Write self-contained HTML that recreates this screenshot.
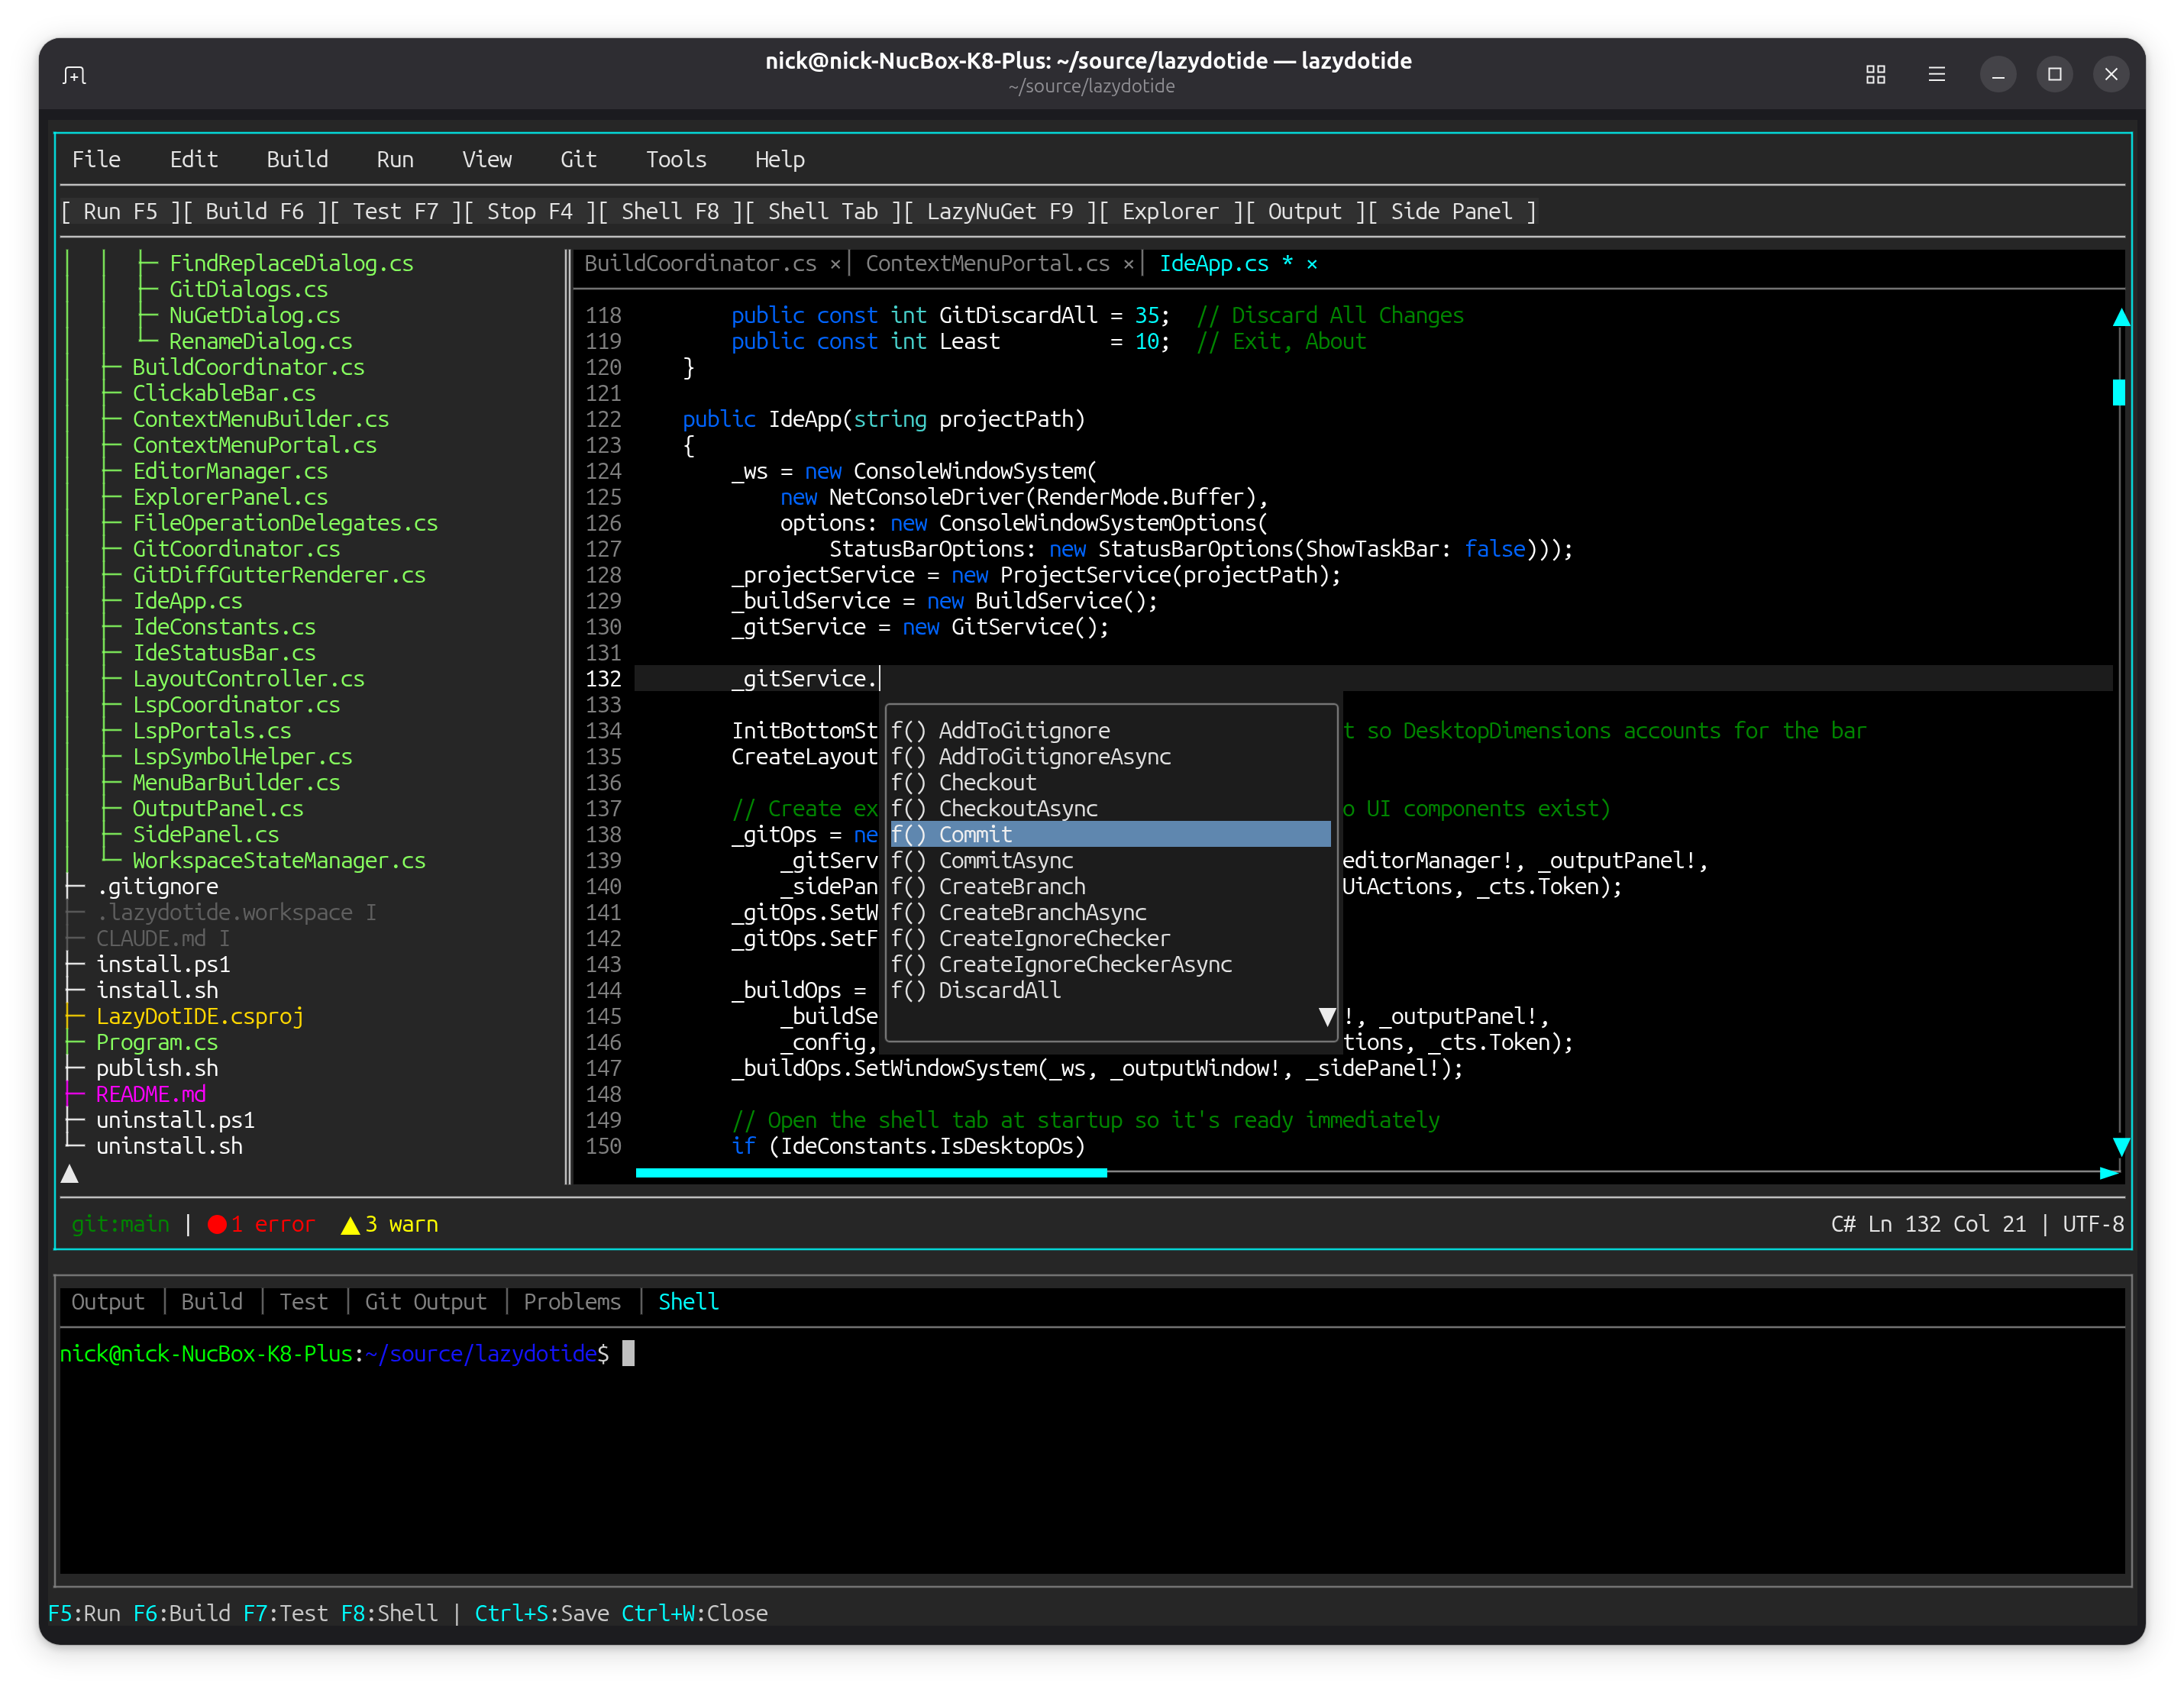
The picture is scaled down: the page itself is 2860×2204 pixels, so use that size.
<!DOCTYPE html>
<html lang="en"><head><meta charset="utf-8"><title>lazydotide</title>
<style>
html,body{margin:0;padding:0;background:#fff}
body{width:2860px;height:2204px;position:relative;overflow:hidden}
.win{position:absolute;left:51px;top:50px;width:2759px;height:2104px;will-change:transform;border-radius:28px;background:#1c1c1f;overflow:hidden;
  box-shadow:0 0 0 1px rgba(0,0,0,.18),0 3px 12px 1px rgba(0,0,0,.18),0 8px 36px 6px rgba(0,0,0,.13)}
.bar{position:absolute;left:0;top:0;width:100%;height:93px;background:#2e2d32}
.band{position:absolute;left:0;top:93px;width:100%;height:14px;background:#1b1b1f}
.title{position:absolute;left:-1px;top:11.5px;width:2752px;text-align:center;color:#fff;font:bold 29.3px/36px "Ubuntu Sans","Ubuntu","Liberation Sans",sans-serif;white-space:pre}
.sub{position:absolute;left:3px;top:48px;width:2752px;text-align:center;color:#908f94;font:24.5px/30px "Ubuntu Sans","Ubuntu","Liberation Sans",sans-serif;white-space:pre}
.circ{position:absolute;top:23px;width:48px;height:48px;border-radius:50%;background:#444348}
.ico{position:absolute}
.scr{position:absolute;left:0;top:0;width:2860px;height:2204px;will-change:transform}
.b{position:absolute}
.t{position:absolute;height:34px;line-height:34px;white-space:pre;font-family:"Ubuntu Sans Mono","DejaVu Sans Mono","Liberation Mono",monospace;
  font-size:30.667px;font-size-adjust:ch-width 0.56;font-kerning:none;font-variant-ligatures:none;letter-spacing:-1.1735px;margin-left:-1.2px;margin-top:1px}
</style></head>
<body>
<div class="win">
 <div class="bar"></div><div class="band"></div>
 <div class="title">nick@nick-NucBox-K8-Plus: ~/source/lazydotide — lazydotide</div>
 <div class="sub">~/source/lazydotide</div>
 <svg class="ico" style="left:30px;top:36px" width="34" height="26" viewBox="0 0 34 26" fill="none" stroke="#f2f2f2" stroke-width="2">
  <path d="M1 23 H3 Q5 23 5 21 V6 Q5 2 9 2 H23.5 Q27.5 2 27.5 6 V21 Q27.5 23 29.5 23 H31.5"/><path d="M11.3 15 H21.3 M16.3 10 V20"/></svg>
 <svg class="ico" style="left:2393px;top:35px" width="26" height="26" viewBox="0 0 26 26" fill="none" stroke="#f2f2f2" stroke-width="2">
  <rect x="1.5" y="1.5" width="8" height="8"/><rect x="15.5" y="1.5" width="8" height="8"/><rect x="1.5" y="15.5" width="8" height="8"/><rect x="15.5" y="15.5" width="8" height="8"/></svg>
 <svg class="ico" style="left:2475px;top:37px" width="22" height="20" viewBox="0 0 22 20" fill="#f2f2f2"><rect x="0" y="0.5" width="21" height="2"/><rect x="0" y="8.7" width="21" height="2"/><rect x="0" y="17" width="21" height="2"/></svg>
 <div class="circ" style="left:2541.5px"></div><div class="circ" style="left:2615.5px"></div><div class="circ" style="left:2689.5px"></div>
 <svg class="ico" style="left:2541.5px;top:23px" width="48" height="48" viewBox="0 0 48 48" fill="none" stroke="#f2f2f2" stroke-width="2"><path d="M16 29 H32"/></svg>
 <svg class="ico" style="left:2615.5px;top:23px" width="48" height="48" viewBox="0 0 48 48" fill="none" stroke="#f2f2f2" stroke-width="2"><rect x="16.5" y="16.5" width="15" height="15"/></svg>
 <svg class="ico" style="left:2689.5px;top:23px" width="48" height="48" viewBox="0 0 48 48" fill="none" stroke="#f2f2f2" stroke-width="2"><path d="M16.5 16.5 L31.5 31.5 M31.5 16.5 L16.5 31.5"/></svg>
</div>
<div class="scr">
<div class="b" style="left:63px;top:157px;width:2736px;height:1972px;background:#262626"></div>
<div class="b" style="left:70px;top:173px;width:2722px;height:2px;background:rgba(0,244,244,.86);box-shadow:0 0 0 1px rgba(0,244,244,.24)"></div>
<div class="b" style="left:70px;top:1635px;width:2722px;height:2px;background:rgba(0,244,244,.86);box-shadow:0 0 0 1px rgba(0,244,244,.24)"></div>
<div class="b" style="left:71px;top:173px;width:2px;height:1464px;background:rgba(0,244,244,.86);box-shadow:0 0 0 1px rgba(0,244,244,.24)"></div>
<div class="b" style="left:2791px;top:173px;width:2px;height:1464px;background:rgba(0,244,244,.86);box-shadow:0 0 0 1px rgba(0,244,244,.24)"></div>
<span class="t " style="left:95px;top:191px;color:#e4e4e4;">File</span>
<span class="t " style="left:223px;top:191px;color:#e4e4e4;">Edit</span>
<span class="t " style="left:351px;top:191px;color:#e4e4e4;">Build</span>
<span class="t " style="left:495px;top:191px;color:#e4e4e4;">Run</span>
<span class="t " style="left:607px;top:191px;color:#e4e4e4;">View</span>
<span class="t " style="left:735px;top:191px;color:#e4e4e4;">Git</span>
<span class="t " style="left:847px;top:191px;color:#e4e4e4;">Tools</span>
<span class="t " style="left:991px;top:191px;color:#e4e4e4;">Help</span>
<div class="b" style="left:79px;top:241px;width:2704px;height:2px;background:rgba(216,216,216,.86);box-shadow:0 0 0 1px rgba(216,216,216,.24)"></div>
<div class="b" style="left:79px;top:259px;width:1936px;height:34px;background:#303030"></div>
<span class="t " style="left:79px;top:259px;color:#e4e4e4;">[ Run F5 ][ Build F6 ][ Test F7 ][ Stop F4 ][ Shell F8 ][ Shell Tab ][ LazyNuGet F9 ][ Explorer ][ Output ][ Side Panel ]</span>
<div class="b" style="left:79px;top:309px;width:2704px;height:2px;background:rgba(216,216,216,.86);box-shadow:0 0 0 1px rgba(216,216,216,.24)"></div>
<div class="b" style="left:87px;top:327px;width:2px;height:34px;background:rgba(135,255,95,.86);box-shadow:0 0 0 1px rgba(135,255,95,.24)"></div>
<div class="b" style="left:135px;top:327px;width:2px;height:34px;background:rgba(135,255,95,.86);box-shadow:0 0 0 1px rgba(135,255,95,.24)"></div>
<div class="b" style="left:183px;top:327px;width:2px;height:34px;background:rgba(135,255,95,.86);box-shadow:0 0 0 1px rgba(135,255,95,.24)"></div>
<div class="b" style="left:182px;top:343px;width:25px;height:2px;background:rgba(135,255,95,.86);box-shadow:0 0 0 1px rgba(135,255,95,.24)"></div>
<span class="t " style="left:223px;top:327px;color:#87ff5f;">FindReplaceDialog.cs</span>
<div class="b" style="left:87px;top:361px;width:2px;height:34px;background:rgba(135,255,95,.86);box-shadow:0 0 0 1px rgba(135,255,95,.24)"></div>
<div class="b" style="left:135px;top:361px;width:2px;height:34px;background:rgba(135,255,95,.86);box-shadow:0 0 0 1px rgba(135,255,95,.24)"></div>
<div class="b" style="left:183px;top:361px;width:2px;height:34px;background:rgba(135,255,95,.86);box-shadow:0 0 0 1px rgba(135,255,95,.24)"></div>
<div class="b" style="left:182px;top:377px;width:25px;height:2px;background:rgba(135,255,95,.86);box-shadow:0 0 0 1px rgba(135,255,95,.24)"></div>
<span class="t " style="left:223px;top:361px;color:#87ff5f;">GitDialogs.cs</span>
<div class="b" style="left:87px;top:395px;width:2px;height:34px;background:rgba(135,255,95,.86);box-shadow:0 0 0 1px rgba(135,255,95,.24)"></div>
<div class="b" style="left:135px;top:395px;width:2px;height:34px;background:rgba(135,255,95,.86);box-shadow:0 0 0 1px rgba(135,255,95,.24)"></div>
<div class="b" style="left:183px;top:395px;width:2px;height:34px;background:rgba(135,255,95,.86);box-shadow:0 0 0 1px rgba(135,255,95,.24)"></div>
<div class="b" style="left:182px;top:411px;width:25px;height:2px;background:rgba(135,255,95,.86);box-shadow:0 0 0 1px rgba(135,255,95,.24)"></div>
<span class="t " style="left:223px;top:395px;color:#87ff5f;">NuGetDialog.cs</span>
<div class="b" style="left:87px;top:429px;width:2px;height:34px;background:rgba(135,255,95,.86);box-shadow:0 0 0 1px rgba(135,255,95,.24)"></div>
<div class="b" style="left:135px;top:429px;width:2px;height:34px;background:rgba(135,255,95,.86);box-shadow:0 0 0 1px rgba(135,255,95,.24)"></div>
<div class="b" style="left:183px;top:429px;width:2px;height:18px;background:rgba(135,255,95,.86);box-shadow:0 0 0 1px rgba(135,255,95,.24)"></div>
<div class="b" style="left:182px;top:445px;width:25px;height:2px;background:rgba(135,255,95,.86);box-shadow:0 0 0 1px rgba(135,255,95,.24)"></div>
<span class="t " style="left:223px;top:429px;color:#87ff5f;">RenameDialog.cs</span>
<div class="b" style="left:87px;top:463px;width:2px;height:34px;background:rgba(135,255,95,.86);box-shadow:0 0 0 1px rgba(135,255,95,.24)"></div>
<div class="b" style="left:135px;top:463px;width:2px;height:34px;background:rgba(135,255,95,.86);box-shadow:0 0 0 1px rgba(135,255,95,.24)"></div>
<div class="b" style="left:134px;top:479px;width:25px;height:2px;background:rgba(135,255,95,.86);box-shadow:0 0 0 1px rgba(135,255,95,.24)"></div>
<span class="t " style="left:175px;top:463px;color:#87ff5f;">BuildCoordinator.cs</span>
<div class="b" style="left:87px;top:497px;width:2px;height:34px;background:rgba(135,255,95,.86);box-shadow:0 0 0 1px rgba(135,255,95,.24)"></div>
<div class="b" style="left:135px;top:497px;width:2px;height:34px;background:rgba(135,255,95,.86);box-shadow:0 0 0 1px rgba(135,255,95,.24)"></div>
<div class="b" style="left:134px;top:513px;width:25px;height:2px;background:rgba(135,255,95,.86);box-shadow:0 0 0 1px rgba(135,255,95,.24)"></div>
<span class="t " style="left:175px;top:497px;color:#87ff5f;">ClickableBar.cs</span>
<div class="b" style="left:87px;top:531px;width:2px;height:34px;background:rgba(135,255,95,.86);box-shadow:0 0 0 1px rgba(135,255,95,.24)"></div>
<div class="b" style="left:135px;top:531px;width:2px;height:34px;background:rgba(135,255,95,.86);box-shadow:0 0 0 1px rgba(135,255,95,.24)"></div>
<div class="b" style="left:134px;top:547px;width:25px;height:2px;background:rgba(135,255,95,.86);box-shadow:0 0 0 1px rgba(135,255,95,.24)"></div>
<span class="t " style="left:175px;top:531px;color:#87ff5f;">ContextMenuBuilder.cs</span>
<div class="b" style="left:87px;top:565px;width:2px;height:34px;background:rgba(135,255,95,.86);box-shadow:0 0 0 1px rgba(135,255,95,.24)"></div>
<div class="b" style="left:135px;top:565px;width:2px;height:34px;background:rgba(135,255,95,.86);box-shadow:0 0 0 1px rgba(135,255,95,.24)"></div>
<div class="b" style="left:134px;top:581px;width:25px;height:2px;background:rgba(135,255,95,.86);box-shadow:0 0 0 1px rgba(135,255,95,.24)"></div>
<span class="t " style="left:175px;top:565px;color:#87ff5f;">ContextMenuPortal.cs</span>
<div class="b" style="left:87px;top:599px;width:2px;height:34px;background:rgba(135,255,95,.86);box-shadow:0 0 0 1px rgba(135,255,95,.24)"></div>
<div class="b" style="left:135px;top:599px;width:2px;height:34px;background:rgba(135,255,95,.86);box-shadow:0 0 0 1px rgba(135,255,95,.24)"></div>
<div class="b" style="left:134px;top:615px;width:25px;height:2px;background:rgba(135,255,95,.86);box-shadow:0 0 0 1px rgba(135,255,95,.24)"></div>
<span class="t " style="left:175px;top:599px;color:#87ff5f;">EditorManager.cs</span>
<div class="b" style="left:87px;top:633px;width:2px;height:34px;background:rgba(135,255,95,.86);box-shadow:0 0 0 1px rgba(135,255,95,.24)"></div>
<div class="b" style="left:135px;top:633px;width:2px;height:34px;background:rgba(135,255,95,.86);box-shadow:0 0 0 1px rgba(135,255,95,.24)"></div>
<div class="b" style="left:134px;top:649px;width:25px;height:2px;background:rgba(135,255,95,.86);box-shadow:0 0 0 1px rgba(135,255,95,.24)"></div>
<span class="t " style="left:175px;top:633px;color:#87ff5f;">ExplorerPanel.cs</span>
<div class="b" style="left:87px;top:667px;width:2px;height:34px;background:rgba(135,255,95,.86);box-shadow:0 0 0 1px rgba(135,255,95,.24)"></div>
<div class="b" style="left:135px;top:667px;width:2px;height:34px;background:rgba(135,255,95,.86);box-shadow:0 0 0 1px rgba(135,255,95,.24)"></div>
<div class="b" style="left:134px;top:683px;width:25px;height:2px;background:rgba(135,255,95,.86);box-shadow:0 0 0 1px rgba(135,255,95,.24)"></div>
<span class="t " style="left:175px;top:667px;color:#87ff5f;">FileOperationDelegates.cs</span>
<div class="b" style="left:87px;top:701px;width:2px;height:34px;background:rgba(135,255,95,.86);box-shadow:0 0 0 1px rgba(135,255,95,.24)"></div>
<div class="b" style="left:135px;top:701px;width:2px;height:34px;background:rgba(135,255,95,.86);box-shadow:0 0 0 1px rgba(135,255,95,.24)"></div>
<div class="b" style="left:134px;top:717px;width:25px;height:2px;background:rgba(135,255,95,.86);box-shadow:0 0 0 1px rgba(135,255,95,.24)"></div>
<span class="t " style="left:175px;top:701px;color:#87ff5f;">GitCoordinator.cs</span>
<div class="b" style="left:87px;top:735px;width:2px;height:34px;background:rgba(135,255,95,.86);box-shadow:0 0 0 1px rgba(135,255,95,.24)"></div>
<div class="b" style="left:135px;top:735px;width:2px;height:34px;background:rgba(135,255,95,.86);box-shadow:0 0 0 1px rgba(135,255,95,.24)"></div>
<div class="b" style="left:134px;top:751px;width:25px;height:2px;background:rgba(135,255,95,.86);box-shadow:0 0 0 1px rgba(135,255,95,.24)"></div>
<span class="t " style="left:175px;top:735px;color:#87ff5f;">GitDiffGutterRenderer.cs</span>
<div class="b" style="left:87px;top:769px;width:2px;height:34px;background:rgba(135,255,95,.86);box-shadow:0 0 0 1px rgba(135,255,95,.24)"></div>
<div class="b" style="left:135px;top:769px;width:2px;height:34px;background:rgba(135,255,95,.86);box-shadow:0 0 0 1px rgba(135,255,95,.24)"></div>
<div class="b" style="left:134px;top:785px;width:25px;height:2px;background:rgba(135,255,95,.86);box-shadow:0 0 0 1px rgba(135,255,95,.24)"></div>
<span class="t " style="left:175px;top:769px;color:#87ff5f;">IdeApp.cs</span>
<div class="b" style="left:87px;top:803px;width:2px;height:34px;background:rgba(135,255,95,.86);box-shadow:0 0 0 1px rgba(135,255,95,.24)"></div>
<div class="b" style="left:135px;top:803px;width:2px;height:34px;background:rgba(135,255,95,.86);box-shadow:0 0 0 1px rgba(135,255,95,.24)"></div>
<div class="b" style="left:134px;top:819px;width:25px;height:2px;background:rgba(135,255,95,.86);box-shadow:0 0 0 1px rgba(135,255,95,.24)"></div>
<span class="t " style="left:175px;top:803px;color:#87ff5f;">IdeConstants.cs</span>
<div class="b" style="left:87px;top:837px;width:2px;height:34px;background:rgba(135,255,95,.86);box-shadow:0 0 0 1px rgba(135,255,95,.24)"></div>
<div class="b" style="left:135px;top:837px;width:2px;height:34px;background:rgba(135,255,95,.86);box-shadow:0 0 0 1px rgba(135,255,95,.24)"></div>
<div class="b" style="left:134px;top:853px;width:25px;height:2px;background:rgba(135,255,95,.86);box-shadow:0 0 0 1px rgba(135,255,95,.24)"></div>
<span class="t " style="left:175px;top:837px;color:#87ff5f;">IdeStatusBar.cs</span>
<div class="b" style="left:87px;top:871px;width:2px;height:34px;background:rgba(135,255,95,.86);box-shadow:0 0 0 1px rgba(135,255,95,.24)"></div>
<div class="b" style="left:135px;top:871px;width:2px;height:34px;background:rgba(135,255,95,.86);box-shadow:0 0 0 1px rgba(135,255,95,.24)"></div>
<div class="b" style="left:134px;top:887px;width:25px;height:2px;background:rgba(135,255,95,.86);box-shadow:0 0 0 1px rgba(135,255,95,.24)"></div>
<span class="t " style="left:175px;top:871px;color:#87ff5f;">LayoutController.cs</span>
<div class="b" style="left:87px;top:905px;width:2px;height:34px;background:rgba(135,255,95,.86);box-shadow:0 0 0 1px rgba(135,255,95,.24)"></div>
<div class="b" style="left:135px;top:905px;width:2px;height:34px;background:rgba(135,255,95,.86);box-shadow:0 0 0 1px rgba(135,255,95,.24)"></div>
<div class="b" style="left:134px;top:921px;width:25px;height:2px;background:rgba(135,255,95,.86);box-shadow:0 0 0 1px rgba(135,255,95,.24)"></div>
<span class="t " style="left:175px;top:905px;color:#87ff5f;">LspCoordinator.cs</span>
<div class="b" style="left:87px;top:939px;width:2px;height:34px;background:rgba(135,255,95,.86);box-shadow:0 0 0 1px rgba(135,255,95,.24)"></div>
<div class="b" style="left:135px;top:939px;width:2px;height:34px;background:rgba(135,255,95,.86);box-shadow:0 0 0 1px rgba(135,255,95,.24)"></div>
<div class="b" style="left:134px;top:955px;width:25px;height:2px;background:rgba(135,255,95,.86);box-shadow:0 0 0 1px rgba(135,255,95,.24)"></div>
<span class="t " style="left:175px;top:939px;color:#87ff5f;">LspPortals.cs</span>
<div class="b" style="left:87px;top:973px;width:2px;height:34px;background:rgba(135,255,95,.86);box-shadow:0 0 0 1px rgba(135,255,95,.24)"></div>
<div class="b" style="left:135px;top:973px;width:2px;height:34px;background:rgba(135,255,95,.86);box-shadow:0 0 0 1px rgba(135,255,95,.24)"></div>
<div class="b" style="left:134px;top:989px;width:25px;height:2px;background:rgba(135,255,95,.86);box-shadow:0 0 0 1px rgba(135,255,95,.24)"></div>
<span class="t " style="left:175px;top:973px;color:#87ff5f;">LspSymbolHelper.cs</span>
<div class="b" style="left:87px;top:1007px;width:2px;height:34px;background:rgba(135,255,95,.86);box-shadow:0 0 0 1px rgba(135,255,95,.24)"></div>
<div class="b" style="left:135px;top:1007px;width:2px;height:34px;background:rgba(135,255,95,.86);box-shadow:0 0 0 1px rgba(135,255,95,.24)"></div>
<div class="b" style="left:134px;top:1023px;width:25px;height:2px;background:rgba(135,255,95,.86);box-shadow:0 0 0 1px rgba(135,255,95,.24)"></div>
<span class="t " style="left:175px;top:1007px;color:#87ff5f;">MenuBarBuilder.cs</span>
<div class="b" style="left:87px;top:1041px;width:2px;height:34px;background:rgba(135,255,95,.86);box-shadow:0 0 0 1px rgba(135,255,95,.24)"></div>
<div class="b" style="left:135px;top:1041px;width:2px;height:34px;background:rgba(135,255,95,.86);box-shadow:0 0 0 1px rgba(135,255,95,.24)"></div>
<div class="b" style="left:134px;top:1057px;width:25px;height:2px;background:rgba(135,255,95,.86);box-shadow:0 0 0 1px rgba(135,255,95,.24)"></div>
<span class="t " style="left:175px;top:1041px;color:#87ff5f;">OutputPanel.cs</span>
<div class="b" style="left:87px;top:1075px;width:2px;height:34px;background:rgba(135,255,95,.86);box-shadow:0 0 0 1px rgba(135,255,95,.24)"></div>
<div class="b" style="left:135px;top:1075px;width:2px;height:34px;background:rgba(135,255,95,.86);box-shadow:0 0 0 1px rgba(135,255,95,.24)"></div>
<div class="b" style="left:134px;top:1091px;width:25px;height:2px;background:rgba(135,255,95,.86);box-shadow:0 0 0 1px rgba(135,255,95,.24)"></div>
<span class="t " style="left:175px;top:1075px;color:#87ff5f;">SidePanel.cs</span>
<div class="b" style="left:87px;top:1109px;width:2px;height:34px;background:rgba(135,255,95,.86);box-shadow:0 0 0 1px rgba(135,255,95,.24)"></div>
<div class="b" style="left:135px;top:1109px;width:2px;height:18px;background:rgba(135,255,95,.86);box-shadow:0 0 0 1px rgba(135,255,95,.24)"></div>
<div class="b" style="left:134px;top:1125px;width:25px;height:2px;background:rgba(135,255,95,.86);box-shadow:0 0 0 1px rgba(135,255,95,.24)"></div>
<span class="t " style="left:175px;top:1109px;color:#87ff5f;">WorkspaceStateManager.cs</span>
<div class="b" style="left:87px;top:1143px;width:2px;height:34px;background:rgba(255,255,255,.86);box-shadow:0 0 0 1px rgba(255,255,255,.24)"></div>
<div class="b" style="left:86px;top:1159px;width:25px;height:2px;background:rgba(255,255,255,.86);box-shadow:0 0 0 1px rgba(255,255,255,.24)"></div>
<span class="t " style="left:127px;top:1143px;color:#ffffff;">.gitignore</span>
<div class="b" style="left:87px;top:1177px;width:2px;height:34px;background:rgba(95,95,95,.86);box-shadow:0 0 0 1px rgba(95,95,95,.24)"></div>
<div class="b" style="left:86px;top:1193px;width:25px;height:2px;background:rgba(95,95,95,.86);box-shadow:0 0 0 1px rgba(95,95,95,.24)"></div>
<span class="t " style="left:127px;top:1177px;color:#5f5f5f;">.lazydotide.workspace I</span>
<div class="b" style="left:87px;top:1211px;width:2px;height:34px;background:rgba(95,95,95,.86);box-shadow:0 0 0 1px rgba(95,95,95,.24)"></div>
<div class="b" style="left:86px;top:1227px;width:25px;height:2px;background:rgba(95,95,95,.86);box-shadow:0 0 0 1px rgba(95,95,95,.24)"></div>
<span class="t " style="left:127px;top:1211px;color:#5f5f5f;">CLAUDE.md I</span>
<div class="b" style="left:87px;top:1245px;width:2px;height:34px;background:rgba(255,255,255,.86);box-shadow:0 0 0 1px rgba(255,255,255,.24)"></div>
<div class="b" style="left:86px;top:1261px;width:25px;height:2px;background:rgba(255,255,255,.86);box-shadow:0 0 0 1px rgba(255,255,255,.24)"></div>
<span class="t " style="left:127px;top:1245px;color:#ffffff;">install.ps1</span>
<div class="b" style="left:87px;top:1279px;width:2px;height:34px;background:rgba(255,255,255,.86);box-shadow:0 0 0 1px rgba(255,255,255,.24)"></div>
<div class="b" style="left:86px;top:1295px;width:25px;height:2px;background:rgba(255,255,255,.86);box-shadow:0 0 0 1px rgba(255,255,255,.24)"></div>
<span class="t " style="left:127px;top:1279px;color:#ffffff;">install.sh</span>
<div class="b" style="left:87px;top:1313px;width:2px;height:34px;background:rgba(255,215,0,.86);box-shadow:0 0 0 1px rgba(255,215,0,.24)"></div>
<div class="b" style="left:86px;top:1329px;width:25px;height:2px;background:rgba(255,215,0,.86);box-shadow:0 0 0 1px rgba(255,215,0,.24)"></div>
<span class="t " style="left:127px;top:1313px;color:#ffd700;">LazyDotIDE.csproj</span>
<div class="b" style="left:87px;top:1347px;width:2px;height:34px;background:rgba(135,255,95,.86);box-shadow:0 0 0 1px rgba(135,255,95,.24)"></div>
<div class="b" style="left:86px;top:1363px;width:25px;height:2px;background:rgba(135,255,95,.86);box-shadow:0 0 0 1px rgba(135,255,95,.24)"></div>
<span class="t " style="left:127px;top:1347px;color:#87ff5f;">Program.cs</span>
<div class="b" style="left:87px;top:1381px;width:2px;height:34px;background:rgba(255,255,255,.86);box-shadow:0 0 0 1px rgba(255,255,255,.24)"></div>
<div class="b" style="left:86px;top:1397px;width:25px;height:2px;background:rgba(255,255,255,.86);box-shadow:0 0 0 1px rgba(255,255,255,.24)"></div>
<span class="t " style="left:127px;top:1381px;color:#ffffff;">publish.sh</span>
<div class="b" style="left:87px;top:1415px;width:2px;height:34px;background:rgba(255,0,255,.86);box-shadow:0 0 0 1px rgba(255,0,255,.24)"></div>
<div class="b" style="left:86px;top:1431px;width:25px;height:2px;background:rgba(255,0,255,.86);box-shadow:0 0 0 1px rgba(255,0,255,.24)"></div>
<span class="t " style="left:127px;top:1415px;color:#ff00ff;">README.md</span>
<div class="b" style="left:87px;top:1449px;width:2px;height:34px;background:rgba(255,255,255,.86);box-shadow:0 0 0 1px rgba(255,255,255,.24)"></div>
<div class="b" style="left:86px;top:1465px;width:25px;height:2px;background:rgba(255,255,255,.86);box-shadow:0 0 0 1px rgba(255,255,255,.24)"></div>
<span class="t " style="left:127px;top:1449px;color:#ffffff;">uninstall.ps1</span>
<div class="b" style="left:87px;top:1483px;width:2px;height:18px;background:rgba(255,255,255,.86);box-shadow:0 0 0 1px rgba(255,255,255,.24)"></div>
<div class="b" style="left:86px;top:1499px;width:25px;height:2px;background:rgba(255,255,255,.86);box-shadow:0 0 0 1px rgba(255,255,255,.24)"></div>
<span class="t " style="left:127px;top:1483px;color:#ffffff;">uninstall.sh</span>
<div class="b" style="left:79px;top:1524px;width:24px;height:25px;background:#e8e8e8;clip-path:polygon(50% 0,100% 100%,0 100%)"></div>
<div class="b" style="left:740px;top:327px;width:2px;height:1224px;background:rgba(216,216,216,.86);box-shadow:0 0 0 1px rgba(216,216,216,.24)"></div>
<div class="b" style="left:745px;top:327px;width:2px;height:1224px;background:rgba(216,216,216,.86);box-shadow:0 0 0 1px rgba(216,216,216,.24)"></div>
<div class="b" style="left:751px;top:327px;width:2032px;height:1224px;background:#000"></div>
<span class="t " style="left:767px;top:327px;color:#828282;">BuildCoordinator.cs ×</span>
<div class="b" style="left:1111px;top:327px;width:2px;height:34px;background:rgba(130,130,130,.86);box-shadow:0 0 0 1px rgba(130,130,130,.24)"></div>
<span class="t " style="left:1135px;top:327px;color:#828282;">ContextMenuPortal.cs ×</span>
<div class="b" style="left:1495px;top:327px;width:2px;height:34px;background:rgba(130,130,130,.86);box-shadow:0 0 0 1px rgba(130,130,130,.24)"></div>
<span class="t " style="left:1519px;top:327px;color:#00ffff;">IdeApp.cs * ×</span>
<div class="b" style="left:751px;top:377px;width:2032px;height:2px;background:rgba(133,133,133,.86);box-shadow:0 0 0 1px rgba(133,133,133,.24)"></div>
<div class="b" style="left:831px;top:871px;width:1936px;height:34px;background:#1c1c1c"></div>
<span class="t " style="left:767px;top:395px;color:#808080;">118</span>
<span class="t" style="left:959px;top:395px;color:#ffffff"><span style="color:#0064ff">public const</span> <span style="color:#48d1cc">int</span> GitDiscardAll = <span style="color:#00ffff">35</span>;  <span style="color:#008600">// Discard All Changes</span></span>
<span class="t " style="left:767px;top:429px;color:#808080;">119</span>
<span class="t" style="left:959px;top:429px;color:#ffffff"><span style="color:#0064ff">public const</span> <span style="color:#48d1cc">int</span> Least         = <span style="color:#00ffff">10</span>;  <span style="color:#008600">// Exit, About</span></span>
<span class="t " style="left:767px;top:463px;color:#808080;">120</span>
<span class="t" style="left:895px;top:463px;color:#ffffff">}</span>
<span class="t " style="left:767px;top:497px;color:#808080;">121</span>
<span class="t " style="left:767px;top:531px;color:#808080;">122</span>
<span class="t" style="left:895px;top:531px;color:#ffffff"><span style="color:#0064ff">public</span> IdeApp(<span style="color:#48d1cc">string</span> projectPath)</span>
<span class="t " style="left:767px;top:565px;color:#808080;">123</span>
<span class="t" style="left:895px;top:565px;color:#ffffff">{</span>
<span class="t " style="left:767px;top:599px;color:#808080;">124</span>
<span class="t" style="left:959px;top:599px;color:#ffffff">_ws = <span style="color:#0064ff">new</span> ConsoleWindowSystem(</span>
<span class="t " style="left:767px;top:633px;color:#808080;">125</span>
<span class="t" style="left:1023px;top:633px;color:#ffffff"><span style="color:#0064ff">new</span> NetConsoleDriver(RenderMode.Buffer),</span>
<span class="t " style="left:767px;top:667px;color:#808080;">126</span>
<span class="t" style="left:1023px;top:667px;color:#ffffff">options: <span style="color:#0064ff">new</span> ConsoleWindowSystemOptions(</span>
<span class="t " style="left:767px;top:701px;color:#808080;">127</span>
<span class="t" style="left:1087px;top:701px;color:#ffffff">StatusBarOptions: <span style="color:#0064ff">new</span> StatusBarOptions(ShowTaskBar: <span style="color:#0064ff">false</span>)));</span>
<span class="t " style="left:767px;top:735px;color:#808080;">128</span>
<span class="t" style="left:959px;top:735px;color:#ffffff">_projectService = <span style="color:#0064ff">new</span> ProjectService(projectPath);</span>
<span class="t " style="left:767px;top:769px;color:#808080;">129</span>
<span class="t" style="left:959px;top:769px;color:#ffffff">_buildService = <span style="color:#0064ff">new</span> BuildService();</span>
<span class="t " style="left:767px;top:803px;color:#808080;">130</span>
<span class="t" style="left:959px;top:803px;color:#ffffff">_gitService = <span style="color:#0064ff">new</span> GitService();</span>
<span class="t " style="left:767px;top:837px;color:#808080;">131</span>
<span class="t " style="left:767px;top:871px;color:#ffffff;">132</span>
<span class="t" style="left:959px;top:871px;color:#ffffff">_gitService.</span>
<span class="t " style="left:767px;top:905px;color:#808080;">133</span>
<span class="t " style="left:767px;top:939px;color:#808080;">134</span>
<span class="t" style="left:959px;top:939px;color:#ffffff">InitBottomSt</span>
<span class="t " style="left:1759px;top:939px;color:#008600;">t so DesktopDimensions accounts for the bar</span>
<span class="t " style="left:767px;top:973px;color:#808080;">135</span>
<span class="t" style="left:959px;top:973px;color:#ffffff">CreateLayout</span>
<span class="t " style="left:767px;top:1007px;color:#808080;">136</span>
<span class="t " style="left:767px;top:1041px;color:#808080;">137</span>
<span class="t" style="left:959px;top:1041px;color:#ffffff"><span style="color:#008600">// Create ex</span></span>
<span class="t " style="left:1759px;top:1041px;color:#008600;">o UI components exist)</span>
<span class="t " style="left:767px;top:1075px;color:#808080;">138</span>
<span class="t" style="left:959px;top:1075px;color:#ffffff">_gitOps = <span style="color:#0064ff">ne</span></span>
<span class="t " style="left:767px;top:1109px;color:#808080;">139</span>
<span class="t" style="left:1023px;top:1109px;color:#ffffff">_gitServ</span>
<span class="t " style="left:1759px;top:1109px;color:#ffffff;">editorManager!, _outputPanel!,</span>
<span class="t " style="left:767px;top:1143px;color:#808080;">140</span>
<span class="t" style="left:1023px;top:1143px;color:#ffffff">_sidePan</span>
<span class="t " style="left:1759px;top:1143px;color:#ffffff;">UiActions, _cts.Token);</span>
<span class="t " style="left:767px;top:1177px;color:#808080;">141</span>
<span class="t" style="left:959px;top:1177px;color:#ffffff">_gitOps.SetW</span>
<span class="t " style="left:767px;top:1211px;color:#808080;">142</span>
<span class="t" style="left:959px;top:1211px;color:#ffffff">_gitOps.SetF</span>
<span class="t " style="left:767px;top:1245px;color:#808080;">143</span>
<span class="t " style="left:767px;top:1279px;color:#808080;">144</span>
<span class="t" style="left:959px;top:1279px;color:#ffffff">_buildOps = </span>
<span class="t " style="left:767px;top:1313px;color:#808080;">145</span>
<span class="t" style="left:1023px;top:1313px;color:#ffffff">_buildSe</span>
<span class="t " style="left:1759px;top:1313px;color:#ffffff;">!, _outputPanel!,</span>
<span class="t " style="left:767px;top:1347px;color:#808080;">146</span>
<span class="t" style="left:1023px;top:1347px;color:#ffffff">_config,</span>
<span class="t " style="left:1759px;top:1347px;color:#ffffff;">tions, _cts.Token);</span>
<span class="t " style="left:767px;top:1381px;color:#808080;">147</span>
<span class="t" style="left:959px;top:1381px;color:#ffffff">_buildOps.SetWindowSystem(_ws, _outputWindow!, _sidePanel!);</span>
<span class="t " style="left:767px;top:1415px;color:#808080;">148</span>
<span class="t " style="left:767px;top:1449px;color:#808080;">149</span>
<span class="t" style="left:959px;top:1449px;color:#ffffff"><span style="color:#008600">// Open the shell tab at startup so it's ready immediately</span></span>
<span class="t " style="left:767px;top:1483px;color:#808080;">150</span>
<span class="t" style="left:959px;top:1483px;color:#ffffff"><span style="color:#0064ff">if</span> (IdeConstants.IsDesktopOs)</span>
<div class="b" style="left:1150.5px;top:871px;width:2.5px;height:34px;background:#e4e4e4"></div>
<div class="b" style="left:2775px;top:429px;width:2px;height:1054px;background:rgba(106,106,106,.86);box-shadow:0 0 0 1px rgba(106,106,106,.24)"></div>
<div class="b" style="left:2775px;top:1517px;width:2px;height:18px;background:rgba(106,106,106,.86);box-shadow:0 0 0 1px rgba(106,106,106,.24)"></div>
<div class="b" style="left:2766.6px;top:403px;width:24px;height:24.3px;background:#00ffff;clip-path:polygon(50% 0,100% 100%,0 100%)"></div>
<div class="b" style="left:2767px;top:497px;width:16px;height:34px;background:#00ffff"></div>
<div class="b" style="left:2766.8px;top:1490.3px;width:23.6px;height:25.2px;background:#00ffff;clip-path:polygon(0 0,100% 0,50% 100%)"></div>
<div class="b" style="left:1439px;top:1533px;width:1338px;height:2px;background:rgba(154,154,154,.86);box-shadow:0 0 0 1px rgba(154,154,154,.24)"></div>
<div class="b" style="left:833px;top:1530px;width:617px;height:12px;background:#00ffff"></div>
<div class="b" style="left:2750.2px;top:1528.2px;width:25px;height:16.5px;background:#00ffff;clip-path:polygon(0 0,100% 50%,0 100%)"></div>
<div class="b" style="left:1151px;top:905px;width:608px;height:476px;background:#1c1c1c"></div>
<div class="b" style="left:1159px;top:921px;width:590px;height:440px;border:2px solid rgba(128,128,128,.9);border-radius:6px;box-shadow:0 0 0 1px rgba(128,128,128,.22),inset 0 0 0 1px rgba(128,128,128,.22)"></div>
<span class="t " style="left:1167px;top:939px;color:#e0e0e0;">f() AddToGitignore</span>
<span class="t " style="left:1167px;top:973px;color:#e0e0e0;">f() AddToGitignoreAsync</span>
<span class="t " style="left:1167px;top:1007px;color:#e0e0e0;">f() Checkout</span>
<span class="t " style="left:1167px;top:1041px;color:#e0e0e0;">f() CheckoutAsync</span>
<div class="b" style="left:1167px;top:1075px;width:576px;height:34px;background:#5f87af"></div>
<span class="t " style="left:1167px;top:1075px;color:#f0f0f0;">f() Commit</span>
<span class="t " style="left:1167px;top:1109px;color:#e0e0e0;">f() CommitAsync</span>
<span class="t " style="left:1167px;top:1143px;color:#e0e0e0;">f() CreateBranch</span>
<span class="t " style="left:1167px;top:1177px;color:#e0e0e0;">f() CreateBranchAsync</span>
<span class="t " style="left:1167px;top:1211px;color:#e0e0e0;">f() CreateIgnoreChecker</span>
<span class="t " style="left:1167px;top:1245px;color:#e0e0e0;">f() CreateIgnoreCheckerAsync</span>
<span class="t " style="left:1167px;top:1279px;color:#e0e0e0;">f() DiscardAll</span>
<div class="b" style="left:1726.8px;top:1320px;width:23.6px;height:25px;background:#ebebeb;clip-path:polygon(0 0,100% 0,50% 100%)"></div>
<div class="b" style="left:79px;top:1567px;width:2704px;height:2px;background:rgba(216,216,216,.86);box-shadow:0 0 0 1px rgba(216,216,216,.24)"></div>
<span class="t" style="left:95px;top:1585px"><span style="color:#008600">git:main</span><span style="color:#ffffff"> | </span></span>
<div class="b" style="left:272px;top:1591px;width:25px;height:25px;border-radius:50%;background:#ff0000"></div>
<span class="t " style="left:303px;top:1585px;color:#ff0000;">1 error</span>
<div class="b" style="left:446px;top:1593px;width:26px;height:24px;background:#ffff00;clip-path:polygon(50% 0,100% 100%,0 100%)"></div>
<span class="t " style="left:479px;top:1585px;color:#ffff00;">3 warn</span>
<span class="t " style="left:2399px;top:1585px;color:#e4e4e4;">C# Ln 132 Col 21 | UTF-8</span>
<div class="b" style="left:70px;top:1669px;width:2722px;height:2px;background:rgba(128,128,128,.86);box-shadow:0 0 0 1px rgba(128,128,128,.24)"></div>
<div class="b" style="left:70px;top:2077px;width:2722px;height:2px;background:rgba(128,128,128,.86);box-shadow:0 0 0 1px rgba(128,128,128,.24)"></div>
<div class="b" style="left:71px;top:1669px;width:2px;height:410px;background:rgba(128,128,128,.86);box-shadow:0 0 0 1px rgba(128,128,128,.24)"></div>
<div class="b" style="left:2791px;top:1669px;width:2px;height:410px;background:rgba(128,128,128,.86);box-shadow:0 0 0 1px rgba(128,128,128,.24)"></div>
<div class="b" style="left:79px;top:1687px;width:2704px;height:374px;background:#000"></div>
<span class="t " style="left:95px;top:1687px;color:#828282;">Output</span>
<span class="t " style="left:239px;top:1687px;color:#828282;">Build</span>
<span class="t " style="left:367px;top:1687px;color:#828282;">Test</span>
<span class="t " style="left:479px;top:1687px;color:#828282;">Git Output</span>
<span class="t " style="left:687px;top:1687px;color:#828282;">Problems</span>
<div class="b" style="left:215px;top:1687px;width:2px;height:34px;background:rgba(110,110,110,.86);box-shadow:0 0 0 1px rgba(110,110,110,.24)"></div>
<div class="b" style="left:343px;top:1687px;width:2px;height:34px;background:rgba(110,110,110,.86);box-shadow:0 0 0 1px rgba(110,110,110,.24)"></div>
<div class="b" style="left:455px;top:1687px;width:2px;height:34px;background:rgba(110,110,110,.86);box-shadow:0 0 0 1px rgba(110,110,110,.24)"></div>
<div class="b" style="left:663px;top:1687px;width:2px;height:34px;background:rgba(110,110,110,.86);box-shadow:0 0 0 1px rgba(110,110,110,.24)"></div>
<div class="b" style="left:839px;top:1687px;width:2px;height:34px;background:rgba(110,110,110,.86);box-shadow:0 0 0 1px rgba(110,110,110,.24)"></div>
<span class="t " style="left:863px;top:1687px;color:#00ffff;">Shell</span>
<div class="b" style="left:79px;top:1737px;width:2704px;height:2px;background:rgba(133,133,133,.86);box-shadow:0 0 0 1px rgba(133,133,133,.24)"></div>
<span class="t" style="left:79px;top:1755px"><span style="color:#00ff00">nick@nick-NucBox-K8-Plus</span><span style="color:#d0d0d0">:</span><span style="color:#1414ff">~/source/lazydotide</span><span style="color:#d0d0d0">$</span></span>
<div class="b" style="left:815px;top:1755px;width:16px;height:34px;background:#c0c0c0"></div>
<span class="t" style="left:63px;top:2095px;color:#c8c8c8"><span style="color:#00ffff">F5</span>:Run <span style="color:#00ffff">F6</span>:Build <span style="color:#00ffff">F7</span>:Test <span style="color:#00ffff">F8</span>:Shell | <span style="color:#00ffff">Ctrl+S</span>:Save <span style="color:#00ffff">Ctrl+W</span>:Close</span>
</div>
</body></html>
